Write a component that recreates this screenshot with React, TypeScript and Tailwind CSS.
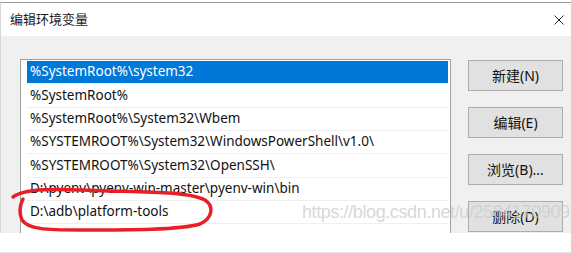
const rows = [
  '%SystemRoot%\\system32',
  '%SystemRoot%',
  '%SystemRoot%\\System32\\Wbem',
  '%SYSTEMROOT%\\System32\\WindowsPowerShell\\v1.0\\',
  '%SYSTEMROOT%\\System32\\OpenSSH\\',
  'D:\\pyenv\\pyenv-win-master\\pyenv-win\\bin',
  'D:\\adb\\platform-tools',
]

const buttons = ['新建(N)', '编辑(E)', '浏览(B)...', '删除(D)']

const font = 'font-["Noto_Sans","Noto_Sans_CJK_SC",sans-serif]'

export default function App() {
  return (
    <div className={`relative flex h-[253px] w-[571px] flex-col overflow-hidden bg-white ${font}`}>
      {/* window frame */}
      <div className="mt-[2px] flex h-[34px] items-center justify-between border-t border-l border-t-[#9c9c9c] border-l-[#d6d6d6] pl-[9px] pr-[5px]">
        <span className="text-[13px] leading-none text-[#1a1a1a]">编辑环境变量</span>
        <svg width="14" height="14" viewBox="0 0 14 14" className="mt-[1px]">
          <path d="M2.5 2.5 L11.5 11.5 M11.5 2.5 L2.5 11.5" stroke="#222" strokeWidth="1" />
        </svg>
      </div>

      <div className="flex h-[197px] gap-[17px] overflow-hidden border-l border-l-[#d6d6d6] bg-[#f0f0f0] pl-[19px] pr-[8px] pt-[23px]">
        <div className="h-[230px] w-[431px] shrink-0 border border-[#a0a0a0] bg-white pt-px pl-[6px] pr-[2px]">
          {rows.map((r, i) => (
            <div
              key={i}
              className={`flex h-[23.33px] items-center border-b border-[#f0f0f0] pl-[3px] text-[13.5px] leading-none whitespace-nowrap ${
                i === 0 ? 'bg-[#0078d7] text-white' : 'text-[#111]'
              }`}
            >
              {r}
            </div>
          ))}
        </div>
        <div className="flex flex-col gap-[16px] pt-px">
          {buttons.map((b) => (
            <div
              key={b}
              className="flex h-[31px] w-[95px] shrink-0 items-center justify-center border border-[#adadad] bg-[#e1e1e1] text-[14px] leading-none text-[#111]"
            >
              {b}
            </div>
          ))}
        </div>
      </div>

      <div className="flex-1 border-b border-[#e4e4e4] bg-white" />

      {/* watermark */}
      <div className='pointer-events-none absolute left-[302px] top-[203px] font-["Liberation_Sans",Arial,sans-serif] text-[18px] leading-none tracking-[-0.4px] whitespace-nowrap text-[#cdcdcd]/80'>
        https://blog.csdn.net/u/2584170909
      </div>

      {/* hand-drawn red circle */}
      <svg className="pointer-events-none absolute left-0 top-0" width="571" height="253" viewBox="0 0 571 253">
        <path
          d="M13 197 C 28 186, 70 190, 110 191 C 150 192, 190 192, 205 200 C 214 206, 213 218, 200 224 C 180 230, 130 230, 80 230 C 45 230, 28 229, 22 220 C 19 213, 20 205, 23 199"
          fill="none"
          stroke="#e81f25"
          strokeWidth="3.5"
          strokeLinecap="round"
        />
      </svg>
    </div>
  )
}
